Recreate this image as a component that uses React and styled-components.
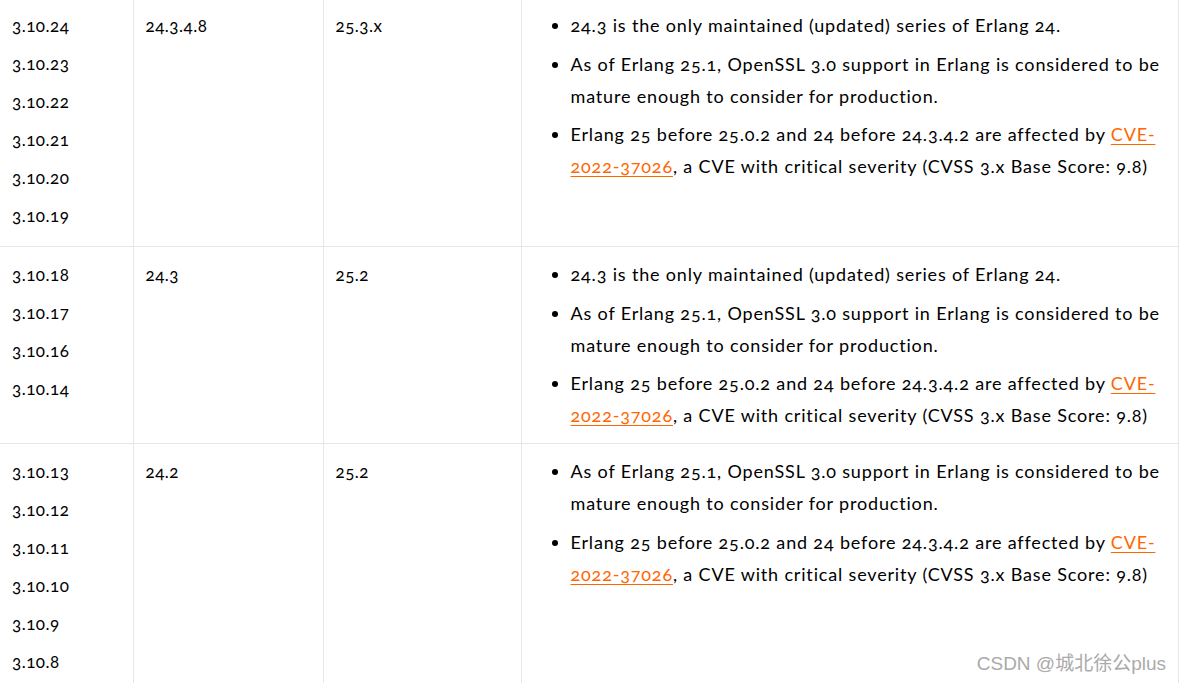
import React from "react";
import styled, { createGlobalStyle } from "styled-components";

const Global = createGlobalStyle`
  html, body { margin: 0; padding: 0; background: #fff; overflow: hidden; }
  body {
    font-family: Lato, "Open Sans", sans-serif;
    color: #000;
    font-variant-numeric: oldstyle-nums;
    font-feature-settings: "onum" 1;
  }
`;

const Page = styled.div`
  width: 1181px;
  height: 683px;
  overflow: hidden;
  position: relative;
`;

const Table = styled.table`
  border-collapse: collapse;
  margin-top: -3px;
  table-layout: fixed;
  width: 1179px;
`;

const Cell = styled.td`
  vertical-align: top;
  border: 1px solid #e6e6e6;
  border-left: ${(p) => (p.$first ? "none" : "1px solid #e6e6e6")};
  padding: 9px 12px 11px 12px;
  font-size: 17px;
  letter-spacing: 0.5px;
  line-height: 38px;
`;

const NotesCell = styled(Cell)`
  padding: 11px 12px 12px 49px;
  line-height: 32px;
  font-size: 18px;
  letter-spacing: 0.83px;
`;

const Versions = styled.div`
  display: flex;
  flex-direction: column;
`;

const List = styled.ul`
  margin: 0;
  padding: 0;
  list-style: disc;
  li { margin: 0 0 6.5px 0; }
  li:last-child { margin-bottom: 0; }
`;

const Link = styled.a`
  color: #ff6600;
  text-decoration: underline;
  text-underline-offset: 3px;
`;

const Watermark = styled.div`
  position: absolute;
  right: 15px;
  bottom: 8px;
  font-family: "Liberation Sans", "Noto Sans CJK SC", sans-serif;
  font-size: 19px;
  color: #aaaaaa;
  text-shadow: 0 0 1px #fff;
  font-variant-numeric: normal;
  font-feature-settings: normal;
`;

const N24 = "24.3 is the only maintained (updated) series of Erlang 24.";
const NSSL =
  "As of Erlang 25.1, OpenSSL 3.0 support in Erlang is considered to be mature enough to consider for production.";

const CveNote = () => (
  <li>
    Erlang 25 before 25.0.2 and 24 before 24.3.4.2 are affected by{" "}
    <Link href="#">CVE-2022-37026</Link>, a CVE with critical severity (CVSS 3.x Base Score: 9.8)
  </li>
);

const rows = [
  {
    versions: ["3.10.24", "3.10.23", "3.10.22", "3.10.21", "3.10.20", "3.10.19"],
    min: "24.3.4.8",
    max: "25.3.x",
    notes: [N24, NSSL],
  },
  {
    versions: ["3.10.18", "3.10.17", "3.10.16", "3.10.14"],
    min: "24.3",
    max: "25.2",
    notes: [N24, NSSL],
  },
  {
    versions: ["3.10.13", "3.10.12", "3.10.11", "3.10.10", "3.10.9", "3.10.8"],
    min: "24.2",
    max: "25.2",
    notes: [NSSL],
  },
];

export default function App() {
  return (
    <Page>
      <Global />
      <Table>
        <colgroup>
          <col style={{ width: 133 }} />
          <col style={{ width: 190 }} />
          <col style={{ width: 198 }} />
          <col />
        </colgroup>
        <tbody>
          {rows.map((r, i) => (
            <tr key={i}>
              <Cell $first>
                <Versions>
                  {r.versions.map((v) => (
                    <span key={v}>{v}</span>
                  ))}
                </Versions>
              </Cell>
              <Cell>{r.min}</Cell>
              <Cell>{r.max}</Cell>
              <NotesCell>
                <List>
                  {r.notes.map((n, j) => (
                    <li key={j}>{n}</li>
                  ))}
                  <CveNote />
                </List>
              </NotesCell>
            </tr>
          ))}
        </tbody>
      </Table>
      <Watermark>CSDN @城北徐公plus</Watermark>
    </Page>
  );
}
